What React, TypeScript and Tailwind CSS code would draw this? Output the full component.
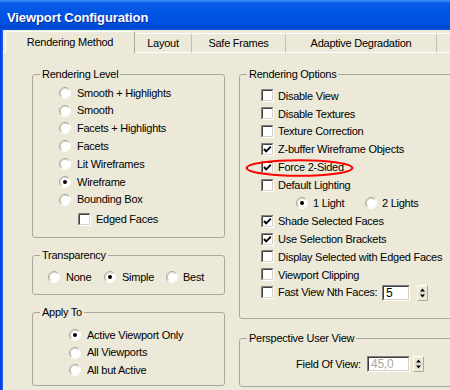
import React from 'react';

const BEIGE = 'bg-[#ece9d8]';

const Radio: React.FC<{ checked?: boolean }> = ({ checked }) => (
  <svg width="12" height="12" viewBox="0 0 12 12" className="shrink-0">
    <circle cx="6" cy="6" r="5" fill="#ffffff" />
    <path d="M2.11 9.89 A5.5 5.5 0 0 1 9.89 2.11" stroke="#aca899" strokeWidth="1" fill="none" />
    <path d="M9.89 2.11 A5.5 5.5 0 0 1 2.11 9.89" stroke="#ffffff" strokeWidth="1" fill="none" />
    <path d="M2.82 9.18 A4.5 4.5 0 0 1 9.18 2.82" stroke="#d4d0c8" strokeWidth="1" fill="none" />
    {checked && <circle cx="6" cy="6" r="2" fill="#000000" />}
  </svg>
);

const Check: React.FC<{ checked?: boolean }> = ({ checked }) => (
  <svg width="13" height="13" viewBox="0 0 13 13" className="shrink-0">
    <rect x="0" y="0" width="13" height="13" fill="#ffffff" />
    <path d="M0.5 12.5 V0.5 H12.5" stroke="#808080" fill="none" />
    <path d="M1.5 11.5 V1.5 H11.5" stroke="#404040" fill="none" />
    <path d="M12.5 0.5 V12.5 H0.5" stroke="#ffffff" fill="none" />
    <path d="M11.5 1.5 V11.5 H1.5" stroke="#d4d0c8" fill="none" />
    {checked && <polyline points="3,6 5.2,8.4 9.8,3.6" stroke="#000000" strokeWidth="1.9" fill="none" />}
  </svg>
);

const Spinner = () => (
  <svg width="11" height="16" viewBox="0 0 11 16" className="ml-[3px] shrink-0">
    <rect x="0" y="0" width="11" height="16" fill="#ece9d8" />
    <path d="M0.5 15.5 V0.5 H10.5" stroke="#ffffff" fill="none" />
    <path d="M10.5 0.5 V15.5 H0.5" stroke="#aca899" fill="none" />
    <line x1="1" y1="8" x2="10" y2="8" stroke="#d4d0c8" />
    <polygon points="3,6.5 8,6.5 5.5,3.5" fill="#000000" />
    <polygon points="3,9.5 8,9.5 5.5,12.5" fill="#000000" />
  </svg>
);

const TextBox: React.FC<{ value: string; width: string; disabled?: boolean }> = ({ value, width, disabled }) => (
  <div className={`${width} h-[16px] shrink-0 border border-t-[#808080] border-l-[#808080] border-b-white border-r-white`}>
    <div className="h-full border border-t-[#404040] border-l-[#404040] border-b-[#d4d0c8] border-r-[#d4d0c8] bg-white flex items-center pl-[2px]">
      <span className={`text-[12px] leading-[12px] ${disabled ? 'text-[#aca899]' : 'text-black'}`}>{value}</span>
    </div>
  </div>
);

const Group: React.FC<{ title: string; className: string; children: React.ReactNode }> = ({ title, className, children }) => (
  <fieldset className={`border border-[#aca899] rounded-[3px] ${className}`}>
    <legend className="ml-[7px] px-[2px] text-[11px] leading-[13px]">{title}</legend>
    {children}
  </fieldset>
);

const RadioRow: React.FC<{ label: string; checked?: boolean; pad: string }> = ({ label, checked, pad }) => (
  <div className={`flex items-center h-[17.8px] gap-[6px] ${pad}`}>
    <Radio checked={checked} />
    <span>{label}</span>
  </div>
);

const CheckRow: React.FC<{ label: string; checked?: boolean }> = ({ label, checked }) => (
  <div className="flex items-center h-[17.9px] gap-[4px] pl-[21px]">
    <Check checked={checked} />
    <span>{label}</span>
  </div>
);

const TABS = [
  { name: 'Rendering Method', w: 'w-[130px]', active: true },
  { name: 'Layout', w: 'w-[57px]' },
  { name: 'Safe Frames', w: 'w-[94px]' },
  { name: 'Adaptive Degradation', w: 'w-[151px]' },
  { name: '', w: 'w-[70px]' },
];

const LEVELS = ['Smooth + Highlights', 'Smooth', 'Facets + Highlights', 'Facets', 'Lit Wireframes', 'Wireframe', 'Bounding Box'];

export default function App() {
  return (
    <div className={`relative w-[450px] h-[390px] overflow-hidden ${BEIGE} text-[11px] tracking-[-0.25px] text-black font-['Liberation_Sans',Arial,sans-serif]`}>
      {/* title bar */}
      <div className="h-[30px] flex items-center pt-[5px] pl-[7px] bg-[linear-gradient(to_bottom,#3d95ff_0%,#0a5de8_10%,#0055e5_45%,#0052e0_75%,#0047d2_92%,#0a56de_100%)]">
        <span className="text-white font-bold text-[13px] tracking-[-0.1px] [text-shadow:1px_1px_0_#0a2a9a]">Viewport Configuration</span>
      </div>

      <div className="flex h-[360px]">
        <div className="w-[3px] shrink-0 bg-[linear-gradient(to_right,#0831d9,#166aee)]" />
        <div className="flex-1 flex flex-col min-w-0">
          {/* tabs */}
          <div className="flex items-end h-[23px] shrink-0">
            <div className="w-[2px] h-[1px] bg-white shrink-0" />
            {TABS.map((t, i) =>
              t.active ? (
                <div key={i} className={`${t.w} shrink-0 h-[22px] ${BEIGE} border-t border-l border-r border-t-white border-l-white border-r-[#aca899] rounded-t-[3px] flex items-center justify-center`}>
                  {t.name}
                </div>
              ) : (
                <div key={i} className={`${t.w} shrink-0 h-[20px] ${BEIGE} border-t border-r border-b border-t-white border-r-[#c5c2b2] border-b-white rounded-t-[3px] flex items-center justify-center whitespace-nowrap`}>
                  {t.name}
                </div>
              )
            )}
            <div className="flex-1 h-[1px] bg-white" />
          </div>

          {/* panel */}
          <div className="flex pl-[29px] pt-[15px] gap-[14px]">
            <div className="w-[193px] shrink-0 flex flex-col">
              <Group title="Rendering Level" className="h-[170px]">
                <div className="pt-[3px]">
                  {LEVELS.map(l => (
                    <RadioRow key={l} label={l} checked={l === 'Wireframe'} pad="pl-[26px]" />
                  ))}
                  <div className="flex items-center h-[18px] gap-[5px] pl-[45px] mt-[2px]">
                    <Check />
                    <span>Edged Faces</span>
                  </div>
                </div>
              </Group>

              <Group title="Transparency" className="h-[46px] mt-[11px]">
                <div className="flex items-center h-[18px] mt-[6px] pl-[15px]">
                  <div className="w-[56px] flex items-center gap-[6px]"><Radio /><span>None</span></div>
                  <div className="w-[62px] flex items-center gap-[6px]"><Radio checked /><span>Simple</span></div>
                  <div className="flex items-center gap-[5px]"><Radio /><span>Best</span></div>
                </div>
              </Group>

              <Group title="Apply To" className="h-[80px] mt-[11px]">
                <div className="pt-[7px]">
                  <RadioRow label="Active Viewport Only" checked pad="pl-[36px]" />
                  <RadioRow label="All Viewports" pad="pl-[36px]" />
                  <RadioRow label="All but Active" pad="pl-[36px]" />
                </div>
              </Group>
            </div>

            <div className="w-[240px] shrink-0 flex flex-col">
              <Group title="Rendering Options" className="h-[251px]">
                <div className="pt-[6px]">
                  <CheckRow label="Disable View" />
                  <CheckRow label="Disable Textures" />
                  <CheckRow label="Texture Correction" />
                  <CheckRow label="Z-buffer Wireframe Objects" checked />
                  <CheckRow label="Force 2-Sided" checked />
                  <CheckRow label="Default Lighting" />
                  <div className="flex items-center h-[17.9px] pl-[56px]">
                    <div className="w-[69px] flex items-center gap-[5px]"><Radio checked /><span>1 Light</span></div>
                    <div className="flex items-center gap-[5px]"><Radio /><span>2 Lights</span></div>
                  </div>
                  <CheckRow label="Shade Selected Faces" checked />
                  <CheckRow label="Use Selection Brackets" checked />
                  <CheckRow label="Display Selected with Edged Faces" />
                  <CheckRow label="Viewport Clipping" />
                  <div className="flex items-center h-[17.9px] gap-[4px] pl-[21px]">
                    <Check />
                    <span className="w-[100px] shrink-0">Fast View Nth Faces:</span>
                    <TextBox value="5" width="w-[28px]" />
                    <Spinner />
                  </div>
                </div>
              </Group>

              <Group title="Perspective User View" className="h-[55px] mt-[13px]">
                <div className="flex items-center h-[16px] mt-[11px] pl-[56px]">
                  <span className="w-[71px] shrink-0">Field Of View:</span>
                  <TextBox value="45,0" width="w-[43px]" disabled />
                  <Spinner />
                </div>
              </Group>
            </div>
          </div>
        </div>
      </div>

      {/* red annotation ellipse */}
      <svg className="absolute left-[244px] top-[157px]" width="112" height="22" viewBox="0 0 112 22">
        <ellipse cx="55.5" cy="11" rx="52.8" ry="7.8" stroke="#ff0000" strokeWidth="2" fill="none" />
      </svg>
    </div>
  );
}
